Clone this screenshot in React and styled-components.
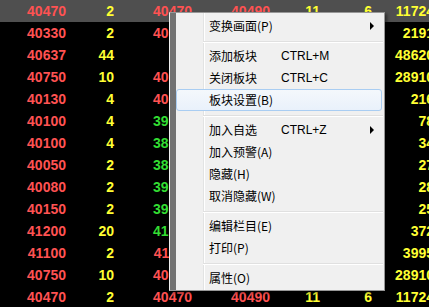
import React from 'react';
import styled, { createGlobalStyle } from 'styled-components';

const GlobalStyle = createGlobalStyle`
  html, body {
    margin: 0;
    padding: 0;
    background: #000;
    overflow: hidden;
  }
`;

const COLORS = {
  r: '#ff5252',
  y: '#ffff33',
  g: '#33dd33',
};

const Screen = styled.div`
  position: relative;
  width: 429px;
  height: 307px;
  overflow: hidden;
  background: #000;
  font-family: "Liberation Sans", Arial, sans-serif;
`;

const Grid = styled.div`
  display: flex;
  flex-direction: column;
  width: 440px;
`;

const Row = styled.div`
  display: grid;
  grid-template-columns: 66px 48px 78px 78px 50px 52px 62px;
  height: 22px;
  background: ${p => (p.$selected ? '#4f4f4f' : 'transparent')};
`;

const Cell = styled.div`
  text-align: right;
  font-size: 14px;
  font-weight: bold;
  line-height: 22px;
  white-space: nowrap;
  color: ${p => COLORS[p.$c] || COLORS.y};
`;

const Menu = styled.div`
  position: absolute;
  left: 169px;
  top: 12px;
  width: 216px;
  box-sizing: border-box;
  display: flex;
  background: #f0f0f0;
  border: 1px solid #979797;
  border-left-color: #eeeeee;
  box-shadow: 2px 2px 3px rgba(0, 0, 0, 0.45);
  font-family: "Noto Sans CJK SC", "Liberation Sans", sans-serif;
  font-size: 12px;
  color: #000;
`;

const Strip = styled.div`
  width: 6px;
  background: #727272;
  flex: none;
`;

const List = styled.div`
  flex: 1;
  padding: 2px 0 1px;
  background: linear-gradient(
    to right,
    transparent 27px,
    #e2e3e3 27px,
    #e2e3e3 28px,
    #ffffff 28px,
    #ffffff 29px,
    transparent 29px
  );
`;

const Item = styled.div`
  display: grid;
  grid-template-columns: 72px 1fr 4px;
  align-items: center;
  height: 22px;
  box-sizing: border-box;
  margin-right: 2px;
  padding: 0 7px 0 32px;
  border: 1px solid ${p => (p.$active ? '#a9cdf2' : 'transparent')};
  border-radius: 3px;
  background: ${p =>
    p.$active ? 'linear-gradient(#f4f8fc, #e9f1fb)' : 'transparent'};
  line-height: 20px;
  white-space: nowrap;
`;

const Shortcut = styled.span`
  font-family: "Liberation Sans", Arial, sans-serif;
  font-size: 12px;
`;

const Arrow = styled.span`
  width: 0;
  height: 0;
  border-top: 4px solid transparent;
  border-bottom: 4px solid transparent;
  border-left: 4px solid #000;
`;

const Separator = styled.div`
  height: 8px;
  box-sizing: border-box;
  padding-top: 4px;
  padding-left: 27px;
  margin-right: 1px;
  &::before {
    content: '';
    display: block;
    height: 1px;
    background: #e0e0e0;
    border-bottom: 1px solid #ffffff;
  }
`;

// columns 4-6 of rows 1-12 sit fully under the context menu, so they are left blank
const rows = [
  { sel: true, c: [['40470', 'r'], ['2', 'y'], ['40470', 'r'], ['40490', 'r'], ['11', 'y'], ['6', 'y'], ['11724', 'y']] },
  { c: [['40330', 'r'], ['2', 'y'], ['40350', 'r'], ['', 'r'], ['', 'y'], ['', 'y'], ['2191', 'y']] },
  { c: [['40637', 'r'], ['44', 'y'], ['', 'r'], ['', 'r'], ['', 'y'], ['', 'y'], ['48620', 'y']] },
  { c: [['40750', 'r'], ['10', 'y'], ['40760', 'r'], ['', 'r'], ['', 'y'], ['', 'y'], ['28910', 'y']] },
  { c: [['40130', 'r'], ['4', 'y'], ['40150', 'r'], ['', 'r'], ['', 'y'], ['', 'y'], ['216', 'y']] },
  { c: [['40100', 'r'], ['4', 'y'], ['39960', 'g'], ['', 'g'], ['', 'y'], ['', 'y'], ['78', 'y']] },
  { c: [['40100', 'r'], ['4', 'y'], ['38950', 'g'], ['', 'g'], ['', 'y'], ['', 'y'], ['34', 'y']] },
  { c: [['40050', 'r'], ['2', 'y'], ['38900', 'g'], ['', 'g'], ['', 'y'], ['', 'y'], ['27', 'y']] },
  { c: [['40080', 'r'], ['2', 'y'], ['39900', 'g'], ['', 'g'], ['', 'y'], ['', 'y'], ['28', 'y']] },
  { c: [['40150', 'r'], ['2', 'y'], ['39800', 'g'], ['', 'g'], ['', 'y'], ['', 'y'], ['25', 'y']] },
  { c: [['41200', 'r'], ['20', 'y'], ['41000', 'g'], ['', 'g'], ['', 'y'], ['', 'y'], ['372', 'y']] },
  { c: [['41100', 'r'], ['2', 'y'], ['41150', 'r'], ['', 'r'], ['', 'y'], ['', 'y'], ['3995', 'y']] },
  { c: [['40750', 'r'], ['10', 'y'], ['40760', 'r'], ['', 'r'], ['', 'y'], ['', 'y'], ['28910', 'y']] },
  { c: [['40470', 'r'], ['2', 'y'], ['40470', 'r'], ['40490', 'r'], ['11', 'y'], ['6', 'y'], ['11724', 'y']] },
];

const menu = [
  { label: '变换画面(P)', arrow: true },
  'sep',
  { label: '添加板块', key: 'CTRL+M' },
  { label: '关闭板块', key: 'CTRL+C' },
  { label: '板块设置(B)', active: true },
  'sep',
  { label: '加入自选', key: 'CTRL+Z', arrow: true },
  { label: '加入预警(A)' },
  { label: '隐藏(H)' },
  { label: '取消隐藏(W)' },
  'sep',
  { label: '编辑栏目(E)' },
  { label: '打印(P)' },
  'sep',
  { label: '属性(O)' },
];

const App = () => {
  return (
    <>
      <GlobalStyle />
      <Screen>
        <Grid>
          {rows.map((row, i) => (
            <Row key={i} $selected={row.sel}>
              {row.c.map(([v, c], j) => (
                <Cell key={j} $c={c}>{v}</Cell>
              ))}
            </Row>
          ))}
        </Grid>
        <Menu>
          <Strip />
          <List>
            {menu.map((m, i) =>
              m === 'sep' ? (
                <Separator key={i} />
              ) : (
                <Item key={i} $active={m.active}>
                  <span>{m.label}</span>
                  <Shortcut>{m.key || ''}</Shortcut>
                  {m.arrow ? <Arrow /> : <span />}
                </Item>
              )
            )}
          </List>
        </Menu>
      </Screen>
    </>
  );
};

export default App;
